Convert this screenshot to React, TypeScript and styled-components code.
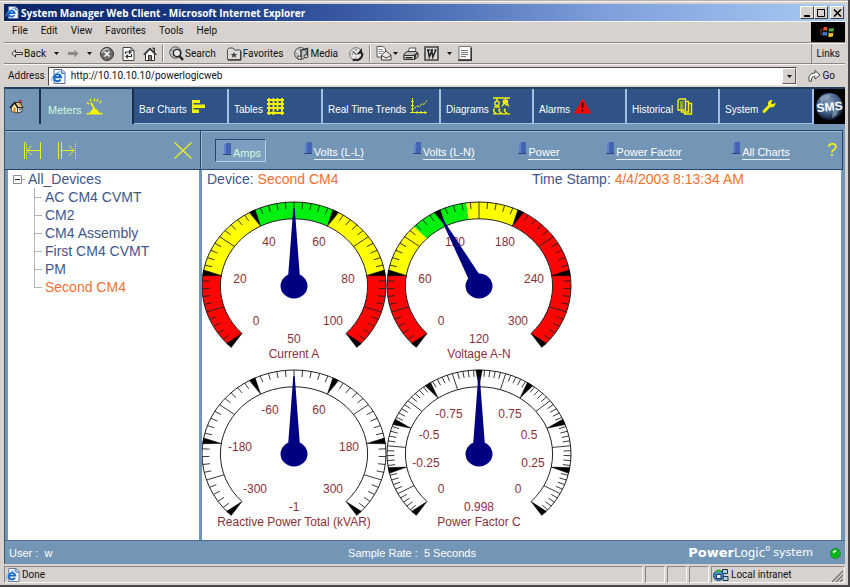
import React from "react";
import styled, { createGlobalStyle, css } from "styled-components";

const GlobalStyle = createGlobalStyle`
  * { box-sizing: border-box; }
  html, body, #root { height: 100%; }
  body { margin: 0; background: #3d383c; overflow: hidden; }
  button, input { font: inherit; color: inherit; border: 0; padding: 0; background: none; border-radius: 0; }
  svg { display: block; flex: none; }
`;

const chromeFont = `Roboto, "Noto Sans", sans-serif`;
const appFont = `"Liberation Sans", Arial, sans-serif`;

/* ---------- browser window ---------- */

const Window = styled.div`
  height: 100vh;
  display: flex;
  flex-direction: column;
  padding: 4px 3px 2px 4px;
  background: #d7d2cd;
  border-right: 2px solid #4a4448;
  border-bottom: 2px solid #4a4448;
  box-shadow: inset 0 1px #b5afad, inset 0 2px #f7f5f3;
  font: 10px/16px ${chromeFont};
  color: #111;
`;

const TitleBar = styled.header`
  display: flex;
  align-items: center;
  height: 17px;
  padding: 0 1px 0 2px;
  gap: 2px;
  background: linear-gradient(90deg, #0a2468 0%, #1b3a86 25%, #4a6db4 50%, #7fa0dc 72%, #a8cbf2 100%);
`;

const Title = styled.h1`
  flex: 1;
  margin: 0;
  font: bold 10px/16px "Open Sans", sans-serif;
  color: #fff;
  white-space: nowrap;
`;

const WindowButton = styled.button<{ $apart?: boolean }>`
  width: 14px;
  height: 13px;
  margin-left: ${(p) => (p.$apart ? "0" : "-2px")};
  background: #d7d2cd;
  border: 1px solid;
  border-color: #fff #443f42 #443f42 #fff;
  display: grid;
  place-items: center;
`;

const MenuBar = styled.nav`
  display: flex;
  align-items: stretch;
  height: 22px;
  border-top: 1px solid #f8f6f4;
  border-bottom: 1px solid #8b8684;
`;

const MenuItem = styled.button`
  padding: 0 0 2px;
  margin-left: 8px;
  margin-right: 5px;
`;

const Flag = styled.div`
  margin-left: auto;
  width: 34px;
  background: #000;
  display: grid;
  place-items: center;
`;

const ToolBar = styled.div`
  display: flex;
  align-items: center;
  height: 21px;
  padding-left: 7px;
  border-top: 1px solid #f8f6f4;
  border-bottom: 1px solid #8b8684;
`;

const toolGaps = { tight: 5, normal: 8, wide: 11 };

const Tool = styled.button<{ $gap?: keyof typeof toolGaps }>`
  display: flex;
  align-items: center;
  gap: 1px;
  white-space: nowrap;
  margin-right: ${(p) => toolGaps[p.$gap ?? "normal"]}px;
`;

const Separator = styled.span`
  width: 2px;
  height: 17px;
  margin-right: 5px;
  border-left: 1px solid #8b8684;
  border-right: 1px solid #fff;
`;

const Links = styled.a`
  margin-left: auto;
  padding: 0 5px 0 4px;
  border-left: 1px solid #8b8684;
  color: inherit;
  text-decoration: none;
  line-height: 19px;
`;

const AddressBar = styled.form`
  display: flex;
  align-items: center;
  height: 23px;
  padding-left: 4px;
  gap: 3px;
  border-top: 1px solid #f8f6f4;
`;

const AddressField = styled.div`
  flex: 1;
  height: 19px;
  display: flex;
  align-items: center;
  background: #fff;
  border: 1px solid;
  border-color: #4b4648 #e9e5e1 #e9e5e1 #4b4648;
  padding-left: 2px;
`;

const AddressInput = styled.input`
  flex: 1;
  min-width: 0;
  padding-left: 5px;
  outline: 0;
`;

const DropButton = styled.button`
  width: 14px;
  height: 16px;
  background: #d7d2cd;
  border: 1px solid;
  border-color: #fff #5b5658 #5b5658 #fff;
  display: grid;
  place-items: center;
`;

const GoButton = styled.button`
  display: flex;
  align-items: center;
  gap: 1px;
  padding: 0 10px 0 8px;
`;

const StatusBar = styled.footer`
  display: flex;
  gap: 2px;
  height: 17px;
  margin-top: 2px;
`;

const StatusCell = styled.div<{ $w?: number }>`
  ${(p) => (p.$w ? css`width: ${p.$w}px;` : css`flex: 1;`)}
  display: flex;
  align-items: center;
  gap: 2px;
  padding: 0 1px;
  border: 1px solid;
  border-color: #8b8684 #f8f6f4 #f8f6f4 #8b8684;
  white-space: nowrap;
`;

const Grip = styled.svg`
  margin-left: auto;
  align-self: flex-end;
`;

/* ---------- web client ---------- */

const Client = styled.main`
  flex: 1;
  min-height: 0;
  display: flex;
  flex-direction: column;
  background: #7396b7;
  border-top: 2px solid #27405f;
  border-left: 1px solid #3f556e;
  font: 11px/14px ${appFont};
`;

const Tabs = styled.nav`
  display: grid;
  grid-template-columns: 36fr 93fr 95fr 94fr 118fr 93fr 93fr 93fr 94fr 31fr;
  height: 35px;
`;

const Tab = styled.button<{ $active?: boolean }>`
  display: flex;
  align-items: center;
  gap: 4px;
  padding-left: ${(p) => (p.$active ? "7px" : "5px")};
  font-size: ${(p) => (p.$active ? "11px" : "10px")};
  white-space: nowrap;
  color: ${(p) => (p.$active ? "#d4fadc" : "#fff")};
  background: ${(p) => (p.$active ? "#7396b7" : "#2f5387")};
  border-right: ${(p) => (p.$active ? "2px solid #1c2e4e" : "2px solid #a3c1df")};
  border-bottom: ${(p) => (p.$active ? "0" : "1px solid #a3c1df")};

  span { margin-top: 7px; }
`;

const HomeTab = styled(Tab)`
  padding-left: 4px;
`;

const SmsTab = styled.a`
  display: grid;
  place-items: center;
  background: #000;
`;

const Options = styled.div`
  display: flex;
  height: 40px;
  margin: 6px 2px 0 0;
  border: 1px solid #24466e;
  border-left: 0;
  box-shadow: inset 0 1px #9dbad5;
`;

const TreeTools = styled.div`
  width: 196px;
  display: flex;
  align-items: center;
  gap: 16px;
  padding: 0 8px 0 18px;
  border-right: 1px solid #24466e;
`;

const IconButton = styled.button<{ $end?: boolean }>`
  margin-left: ${(p) => (p.$end ? "auto" : "0")};
`;

const ChartLinks = styled.nav`
  flex: 1;
  display: grid;
  grid-template-columns: 89fr 109fr 106fr 88fr 126fr 95fr auto;
  align-items: center;
  padding: 0 5px 0 14px;
  box-shadow: inset 1px 0 #9dbad5;
`;

const ChartLink = styled.a<{ $active?: boolean }>`
  justify-self: start;
  display: flex;
  align-items: flex-start;
  gap: 1px;
  height: 23px;
  padding: 3px 4px 0 0;
  white-space: nowrap;
  color: ${(p) => (p.$active ? "#d4fadc" : "#fff")};
  text-decoration: none;

  span {
    margin-top: 4px;
    line-height: 13px;
    border-bottom: ${(p) => (p.$active ? "0" : "1px solid #e4eef8")};
  }
  ${(p) =>
    p.$active &&
    css`
      padding: 3px 4px 0 7px;
      border: 1px solid;
      border-color: #24466e #b4cde4 #b4cde4 #24466e;
      background: #7c9ec0;
    `}
`;

const Help = styled.button`
  color: #f4f400;
  font-size: 18px;
  line-height: 24px;
`;

const Body = styled.div`
  flex: 1;
  min-height: 0;
  display: grid;
  grid-template-columns: 191px 1fr;
  gap: 3px;
  padding: 0 4px 0 3px;
  font-size: 14px;
  line-height: 18px;
  color: #3f5688;
`;

const Pane = styled.section`
  background: #fff;
  overflow: hidden;
`;

const TreeRoot = styled.div`
  display: flex;
  align-items: center;
  gap: 2px;
  padding-left: 5px;
`;

const TreeList = styled.ul`
  list-style: none;
  margin: 0;
  padding: 0 0 0 26px;
`;

const TreeNode = styled.li<{ $last?: boolean; $current?: boolean }>`
  height: 18px;
  display: flex;
  color: ${(p) => (p.$current ? "#f07030" : "inherit")};

  &::before {
    content: "";
    width: 8px;
    height: 9px;
    margin-right: 3px;
    border-bottom: 1px solid #b4b4b8;
  }
  background: linear-gradient(#b4b4b8, #b4b4b8) no-repeat 0 0 / 1px ${(p) => (p.$last ? "9px" : "18px")};
`;

const PlainLink = styled.a`
  color: inherit;
  text-decoration: none;
`;

const Reading = styled.div`
  display: grid;
  grid-template-columns: 327fr 311fr;
  padding-left: 5px;
  em { font-style: normal; color: #f07030; }
`;

const Gauges = styled.div`
  display: grid;
  grid-template-columns: 185px 185px;
  padding-top: 12px;
`;

const GaugeArt = styled.svg`
  font: 12px ${appFont};
  fill: #8b3038;
`;

const ClientFooter = styled.div`
  display: grid;
  grid-template-columns: 338fr 339fr auto;
  align-items: center;
  height: 24px;
  padding: 1px 4px 0;
  border-top: 1px solid #4c6d92;
  color: #fff;
`;

const Brand = styled.div`
  display: flex;
  align-items: center;
  font: 12px/16px "DejaVu Sans", sans-serif;
  b { font-size: 13px; }
  sup { font-size: 8px; line-height: 8px; align-self: flex-start; }
  small { font-size: 11px; margin: 0 17px 0 3px; }
`;

/* ---------- gauge ---------- */

type Band = [number, number, string];
type Label = [number, number, string];
interface GaugeProps {
  title: string;
  value: string;
  majors: number;
  needle: number;
  bands?: Band[];
  labels: Label[];
}

const CX = 92;
const CY = 86;
const RX = 92;
const RY = 84;

const at = (deg: number, r: number) => {
  const a = (deg * Math.PI) / 180;
  return `${(CX + RX * r * Math.sin(a)).toFixed(2)} ${(CY - RY * r * Math.cos(a)).toFixed(2)}`;
};
const arc = (from: number, to: number, r: number) =>
  `A${RX * r} ${RY * r} 0 ${Math.abs(to - from) > 180 ? 1 : 0} ${to > from ? 1 : 0} ${at(to, r)}`;

function Gauge({ title, value, majors, needle, bands = [], labels }: GaugeProps) {
  const step = 270 / majors;
  const ticks = Array.from({ length: majors * 10 + 1 }, (_, i) => i);
  return (
    <GaugeArt width="185" height="168" viewBox="0 0 185 168" role="img" aria-label={title} overflow="visible">
      {bands.map(([from, to, fill]) => (
        <path key={from} fill={fill} d={`M${at(from, 1)}${arc(from, to, 1)}L${at(to, 0.8)}${arc(to, from, 0.8)}Z`} />
      ))}
      <path d={`M${at(-135, 1)}${arc(-135, 135, 1)}`} fill="none" stroke="#222" />
      <path d={`M${at(-135, 0.8)}${arc(-135, 135, 0.8)}`} fill="none" stroke="#222" />
      {ticks.map((i) => {
        const d = -135 + (i * step) / 10;
        if (i % 10 === 0) {
          return <path key={i} fill="#000" stroke="#000" strokeWidth="0.5" d={`M${at(d - 2, 1)}L${at(d + 2, 1)}L${at(d, 0.8)}Z`} />;
        }
        const inner = i % 5 === 0 ? 0.8 : 0.92;
        return <path key={i} stroke="#222" strokeWidth="0.9" d={`M${at(d, 1)}L${at(d, inner)}`} />;
      })}
      {labels.map(([x, y, text], i) => (
        <text key={i} x={x} y={y} textAnchor="middle">{text}</text>
      ))}
      <text x={CX} y="143" textAnchor="middle">{value}</text>
      <text x={CX} y="158" textAnchor="middle">{title}</text>
      <g fill="#000080">
        <ellipse cx={CX} cy={CY} rx="13.5" ry="12.5" />
        <path d={`M${CX - 6} ${CY - 8}L${CX - 0.7} 8H${CX + 0.7}L${CX + 6} ${CY - 8}Z`} transform={`rotate(${needle} ${CX} ${CY})`} />
      </g>
    </GaugeArt>
  );
}

const RED = "#fb0505";
const YELLOW = "#ffff00";
const GREEN = "#00f010";

const gauges: GaugeProps[] = [
  {
    title: "Current A", value: "50", majors: 5, needle: 0,
    bands: [[-135, -81, RED], [-81, -27, YELLOW], [-27, 27, GREEN], [27, 81, YELLOW], [81, 135, RED]],
    labels: [[54, 125, "0"], [38, 83, "20"], [67, 46, "40"], [117, 46, "60"], [146, 83, "80"], [131, 125, "100"]],
  },
  {
    title: "Voltage A-N", value: "120", majors: 5, needle: -29,
    bands: [[-135, -81, RED], [-81, -45, YELLOW], [-45, -8, GREEN], [-8, 27, YELLOW], [27, 135, RED]],
    labels: [[54, 125, "0"], [38, 83, "60"], [68, 46, "120"], [118, 46, "180"], [147, 83, "240"], [131, 125, "300"]],
  },
  {
    title: "Reactive Power Total (kVAR)", value: "-1", majors: 5, needle: 0,
    labels: [[53, 125, "-300"], [38, 83, "-180"], [68, 46, "-60"], [117, 46, "60"], [147, 83, "180"], [131, 125, "300"]],
  },
  {
    title: "Power Factor C", value: "0.998", majors: 8, needle: 0,
    labels: [[54, 125, "0"], [39, 99, "-0.25"], [42, 71, "-0.5"], [62, 50, "-0.75"], [123, 50, "0.75"], [142, 71, "0.5"], [146, 99, "0.25"], [131, 125, "0"]],
  },
];

/* ---------- icons ---------- */

const Caret = () => (
  <svg width="5" height="3" viewBox="0 0 5 3"><path d="M0 0h5L2.5 3Z" fill="#111" /></svg>
);

const PageE = ({ size = 15 }: { size?: number }) => (
  <svg width={size} height={size} viewBox="0 0 15 15">
    <path d="M3 .5h8l3 3v11H3Z" fill="#f6f9ff" stroke="#5a6c9a" />
    <path d="M10.500.5v4H14" fill="#c9d7ef" stroke="#5a6c9a" />
    <path d="M9.600 10.500A3.500 3.500 0 1 1 10 8.200H3.500" fill="none" stroke="#1568c8" strokeWidth="2" />
    <path d="M1 12Q-.5 8 5 4.500T11.500 4" fill="none" stroke="#5fa8e8" />
  </svg>
);

const WindowsFlag = () => (
  <svg width="16" height="14" viewBox="0 0 16 14">
    <path d="M3.500 2.500q2-1.500 4.500 0L7.500 6q-2.500-1.500-4.500 0Z" fill="#e2532d" />
    <path d="M9 3q2.500 1.300 5-.3L13.500 6.500q-2.500 1.500-5 .2Z" fill="#55b344" />
    <path d="M2.800 7q2-1.500 4.500 0l-.5 4q-2.500-1.500-4.500 0Z" fill="#3c78d8" />
    <path d="M8.400 7.600q2.500 1.300 5-.2L13 11.200q-2.500 1.500-5 .2Z" fill="#f2c230" />
    <path d="M1.500 3v8M.5 4v5" stroke="#874035" strokeDasharray="1 1" />
    <path d="M7.800 2v10M3 6.500l5 .3 5.500.2" stroke="#111" fill="none" />
  </svg>
);

const Arrow = ({ gray }: { gray?: boolean }) => (
  <svg width="12" height="9" viewBox="0 0 12 9">
    {gray ? (
      <path d="M11.500 4.500L7.500.5v2.500H1v3h6.500v2.500Z" fill="#8d8988" />
    ) : (
      <path d="M.8 4.500L4.500 1v2.500h7v2h-7V8Z" fill="#f2f0ee" stroke="#333" />
    )}
  </svg>
);

const Stop = () => (
  <svg width="14" height="14" viewBox="0 0 14 14">
    <circle cx="7" cy="7" r="6.500" fill="#6c6c6c" stroke="#333" />
    <path d="M2 6a5 5 0 0 1 7-3.500" stroke="#c8c8c8" strokeWidth="1.500" fill="none" />
    <path d="M4.500 4.500l5 5m0-5l-5 5" stroke="#fff" strokeWidth="1.600" />
  </svg>
);

const Refresh = () => (
  <svg width="13" height="14" viewBox="0 0 13 14">
    <path d="M1 .5h8l3 3v10H1Z" fill="#fff" stroke="#444" />
    <path d="M9 .5v3h3" fill="none" stroke="#444" />
    <path d="M3.500 7V5h5M7 3.200L9 5 7 6.800M9.500 7v2.500h-5M6 7.700l-2 1.800 2 1.900" fill="none" stroke="#333" strokeWidth="1.200" />
  </svg>
);

const House = () => (
  <svg width="14" height="14" viewBox="0 0 14 14">
    <path d="M9.500 1h2v4" fill="#777" stroke="#333" />
    <path d="M2.500 7v6.500h9V7L7 2.500Z" fill="#fff" stroke="#333" />
    <path d="M.7 7.700L7 1.500l6.300 6.200" fill="none" stroke="#333" strokeWidth="1.400" />
    <path d="M5.500 13V8.500h3V13" fill="#888" stroke="#333" />
  </svg>
);

const Search = () => (
  <svg width="15" height="15" viewBox="0 0 15 15">
    <circle cx="6.500" cy="6.500" r="5.700" fill="#c8c8c8" stroke="#555" />
    <path d="M1.500 4l4 1-1.500 4M3 11l2-2" stroke="#777" fill="none" />
    <circle cx="8" cy="7" r="3.600" fill="#eee" stroke="#222" strokeWidth="1.400" />
    <path d="M10.500 10l3.500 4" stroke="#222" strokeWidth="2.400" />
  </svg>
);

const Folder = () => (
  <svg width="15" height="14" viewBox="0 0 15 14">
    <path d="M.5 12.500v-10L2 1h4l1.500 2h6v9.500Z" fill="#dcdad8" stroke="#555" />
    <path d="M1 13.200h13V4" fill="none" stroke="#333" />
    <path d="M7 5l1 2h2.300L8.500 8.500l.6 2.300L7 9.500l-2.100 1.300.6-2.300L3.700 7H6Z" fill="#444" />
  </svg>
);

const Media = () => (
  <svg width="15" height="14" viewBox="0 0 15 14">
    <circle cx="6.500" cy="6.500" r="6" fill="#bdbdbd" stroke="#555" />
    <path d="M2 4l3 1 1 3-2 3M8 1l-1 3" stroke="#fff" fill="none" />
    <path d="M7 10V3l6.500-1.500v7" fill="none" stroke="#333" strokeWidth="1.400" />
    <ellipse cx="5.500" cy="10.700" rx="2.200" ry="1.700" fill="#ddd" stroke="#333" />
    <ellipse cx="12" cy="9.200" rx="2" ry="1.600" fill="#ddd" stroke="#333" />
  </svg>
);

const History = () => (
  <svg width="15" height="15" viewBox="0 0 15 15">
    <circle cx="7" cy="8" r="6.300" fill="#e4e4e4" stroke="#777" />
    <path d="M13.300 7a6.500 6.500 0 0 1-9.500 6.500" fill="none" stroke="#222" strokeWidth="2" />
    <path d="M7 3v1.500M2.500 8H4M7 13v-1.500M3.500 5l1 1" stroke="#555" />
    <path d="M7.500 8.500L13 2v5.500Z" fill="#222" />
    <path d="M7.500 8.500L4 6" stroke="#222" />
  </svg>
);

const Mail = () => (
  <svg width="16" height="15" viewBox="0 0 16 15">
    <path d="M1 .5h6l2.500 2.500v8H1Z" fill="#f8f8f8" stroke="#555" />
    <path d="M2.500 3.500h4M2.500 5.500h5M2.500 7.500h3" stroke="#888" />
    <path d="M5.500 9L10 5l5 4v5h-9.500Z" fill="#e8e8e8" stroke="#444" />
    <path d="M5.500 9.500L10 12l5-2.500" fill="none" stroke="#444" />
  </svg>
);

const Printer = () => (
  <svg width="16" height="14" viewBox="0 0 16 14">
    <path d="M5 5.500L6.500 1h6.500l-1.500 4.500" fill="#fff" stroke="#555" />
    <path d="M1 7l3-2.500h9L15 6v4l-3.500 2.500H1Z" fill="#bbb" stroke="#333" />
    <path d="M1 8.500h10.500v4H1Z" fill="#ddd" stroke="#333" />
    <path d="M2.500 10.700h7M12 12V8l3-2" stroke="#222" fill="none" strokeWidth="1.500" />
  </svg>
);

const WordIcon = () => (
  <svg width="15" height="15" viewBox="0 0 15 15">
    <path d="M1 1h13v13H1Z" fill="#d8d8d8" stroke="#444" strokeWidth="1.600" />
    <path d="M3 4h2.800M6.500 4H9M10.500 4h2M4 4l1.300 7L7.800 5l1 6 3-7" fill="none" stroke="#222" strokeWidth="1.500" />
  </svg>
);

const Note = () => (
  <svg width="15" height="15" viewBox="0 0 15 15">
    <path d="M2 .5h12v13H2Z" fill="#fafafa" stroke="#777" />
    <path d="M1 14.200h13.300V1.500" fill="none" stroke="#333" strokeWidth="1.400" />
    <path d="M4 4.500h7M4 6.500h7M4 8.500h7M4 10.500h5" stroke="#777" />
  </svg>
);

const GoArrow = () => (
  <svg width="13" height="14" viewBox="0 0 13 14">
    <path d="M1.500 12.500C-.5 8 2.500 3.500 7 4V1.500L12 6 7 10V7.500C4.500 7.200 3 9 3.500 12Z" fill="#f4f4f4" stroke="#444" />
  </svg>
);

const ColorHouse = () => (
  <svg width="15" height="15" viewBox="0 0 15 15">
    <path d="M10 1h2.500v4.500H10Z" fill="#b02a48" />
    <path d="M2.500 8.500L5.500 4.500 8.500 9v5l-6-1.500Z" fill="#fff2b0" stroke="#4a3418" strokeWidth=".8" />
    <path d="M8.500 9h4.500v3.500L8.500 14Z" fill="#fffbe8" stroke="#222" strokeWidth=".8" />
    <path d="M5.500 3.500h5.500L14 8.500H8.800Z" fill="#e0bd7c" stroke="#1d1010" strokeWidth=".8" />
    <path d="M1 9L5.500 3.500 8.800 8.800" fill="none" stroke="#1d1010" strokeWidth="1.200" />
    <path d="M4.500 8.500h2v4.800l-2-.5Z" fill="#e5761c" />
    <path d="M10.300 10h1.500v1.500h-1.500Z" fill="#3c5a90" />
  </svg>
);

const MeterIcon = () => (
  <svg width="17" height="17" viewBox="0 0 17 17">
    <path d="M.5 15.700h16" stroke="#f4f400" strokeWidth="1.600" />
    <path d="M4 14.500L6.500 11.500h4L13 14.500Z" fill="#f4f400" stroke="#f4f400" />
    <path d="M9 12L5 5" stroke="#f4f400" strokeWidth="1.800" />
    <path d="M1 4.500l2 1.800M4 1l1 2.500M8.500 .5v3M12 1l-1 2.600M15.500 3l-2 2.200" stroke="#f4f400" strokeWidth="1.200" />
  </svg>
);

const BarsIcon = () => (
  <svg width="15" height="15" viewBox="0 0 15 15">
    <path d="M1 1h8v3H1ZM1 5.500h13v3.500H1ZM1 10.500h7V14H1ZM1 1h1.500v13H1Z" fill="#f4f400" />
  </svg>
);

const TableIcon = () => (
  <svg width="17" height="17" viewBox="0 0 17 17">
    <path d="M0 2h17M0 6h17M0 10h17M0 15h17M2 0v17M6.500 0v17M10.500 0v13M15 0v17" stroke="#f4f400" strokeWidth="1.800" />
  </svg>
);

const TrendIcon = () => (
  <svg width="18" height="17" viewBox="0 0 18 17">
    <path d="M2.500 0v15M0 14.500h17M1 3.500h3M1 7.500h3M1 11h3M7 13v3M11 13v3M15 13v3" stroke="#e8f020" />
    <path d="M4.500 10.500l2.500-3 2.500 1.500L12 5.500l2 1 3-4" fill="none" stroke="#e8f020" strokeDasharray="3 1" />
  </svg>
);

const DiagramIcon = () => (
  <svg width="17" height="18" viewBox="0 0 17 18">
    <path d="M0 1h17M4 1v3M12.500 1v3" stroke="#f4f400" strokeWidth="1.400" />
    <circle cx="4" cy="6.300" r="2.200" fill="none" stroke="#f4f400" strokeWidth="1.400" />
    <path d="M1 10h6M9 9.500L12.500 4 16 9.500M9.500 4.500L14 8.500M10.500 3.500h4v2h-4Z" fill="none" stroke="#f4f400" strokeWidth="1.300" />
    <path d="M.5 12v2l3 3M6 12v2l3 3M11.500 12v2l3 3M0 12.300h2M5.500 12.300h2M11 12.300h2M0 16.800h17" fill="none" stroke="#f4f400" strokeWidth="1.300" />
  </svg>
);

const AlarmIcon = () => (
  <svg width="17" height="16" viewBox="0 0 17 16">
    <path d="M8.500 0L17 15.500H0Z" fill="#f60808" />
    <path d="M8.500 4.500v5.500M8.500 11.500v2" stroke="#300" strokeWidth="1.800" />
  </svg>
);

const HistoricalIcon = () => (
  <svg width="16" height="17" viewBox="0 0 16 17">
    <g fill="#2f5387" stroke="#f4f400" strokeWidth="1.400">
      <path d="M7.500 5.500h7v10.500h-7Z" />
      <path d="M4.500 3.500h7v10.500h-7Z" />
      <path d="M1 2.500L2.500 1H8.500v11H1Z" />
      <path d="M3 4h3.500M3 6h3.500M3 8h3.500M3 10h3.500" strokeWidth="1" />
    </g>
  </svg>
);

const Wrench = () => (
  <svg width="14" height="15" viewBox="0 0 14 15">
    <path d="M13.300 3.500L10.800 5.500 9 4l1.700-3C7 .5 5.200 3.200 6.300 6L.8 11.500Q0 14 2.800 14L8 8.200c3.500.6 6-1.500 5.300-4.700Z" fill="#f4f400" />
  </svg>
);

const Globe = () => (
  <svg width="29" height="31" viewBox="0 0 29 31">
    <defs>
      <radialGradient id="globe" cx=".45" cy=".35" r=".65">
        <stop offset="0" stopColor="#7f97b8" />
        <stop offset=".6" stopColor="#45628c" />
        <stop offset="1" stopColor="#0c1930" />
      </radialGradient>
    </defs>
    <circle cx="14.500" cy="15.500" r="13.500" fill="url(#globe)" />
    <path d="M5 7q5-5 11-3l-2 4-5 1-3 4ZM18 20l5-1-1 5-5 3Z" fill="#a8b8c8" opacity=".55" />
    <text x="14.500" y="20" textAnchor="middle" fill="#fff" fontSize="12" fontFamily="Liberation Sans" fontWeight="bold" transform="rotate(-6 14.500 16)">SMS</text>
  </svg>
);

const PanLeft = () => (
  <svg width="18" height="17" viewBox="0 0 18 17">
    <path d="M1.500 0v17M17.500 0v17M4 8.500h13M9 3.500l-5 5 5 5" fill="none" stroke="#e8f020" />
    <path d="M3.500 0v17" stroke="#e8f020" strokeDasharray="1 1" />
  </svg>
);

const PanRight = () => (
  <svg width="20" height="17" viewBox="0 0 20 17">
    <path d="M1.500 0v17M4.500 0v17M5 8.500h12M12 3.500l5 5-5 5" fill="none" stroke="#e8f020" />
    <path d="M18.500 0v17" stroke="#e8f020" strokeDasharray="1 1" />
  </svg>
);

const Cross = () => (
  <svg width="18" height="17" viewBox="0 0 18 17"><path d="M.5.500l17 16m0-16l-17 16" stroke="#e8f020" strokeWidth="1.300" /></svg>
);

const Marker = () => (
  <svg width="9" height="13" viewBox="0 0 9 13">
    <path d="M1 1h3v10H1Z" fill="#5f80cc" />
    <path d="M3 0h5v11H3Z" fill="#4365b4" />
    <path d="M0 11h8v1H0Z" fill="#2c4678" />
  </svg>
);

const Expander = () => (
  <svg width="13" height="9" viewBox="0 0 13 9">
    <path d="M.5.500h8v8h-8Z" fill="#fff" stroke="#8c8c94" />
    <path d="M2 4.500h5" stroke="#222" />
    <path d="M9 4.500h3" stroke="#b4b4b8" />
  </svg>
);

const Led = () => (
  <svg width="11" height="11" viewBox="0 0 11 11">
    <circle cx="5.500" cy="5.500" r="5" fill="#08b818" stroke="#067a14" strokeWidth=".6" />
    <path d="M3 4.500l3-2" stroke="#e8ffe8" strokeWidth="1.600" />
  </svg>
);

const Intranet = () => (
  <svg width="16" height="14" viewBox="0 0 16 14">
    <path d="M9.500 1.500h5v4h-5ZM10 8.500h5v4h-5Z" fill="#a8cfe8" stroke="#234" />
    <path d="M8 4h2M8 10h2" stroke="#234" strokeWidth="1.500" />
    <circle cx="5.500" cy="7.500" r="5" fill="#3c8ed0" stroke="#1b3a68" />
    <path d="M1.500 4Q5-1 9 3L6 5Z" fill="#3fae49" />
    <path d="M3.500 6.500h4.500v4H3.500Z" fill="#e8f4ff" stroke="#234" />
  </svg>
);

/* ---------- data ---------- */

const menus = ["File", "Edit", "View", "Favorites", "Tools", "Help"];
const tabs: [string, React.ReactNode][] = [
  ["Bar Charts", <BarsIcon />],
  ["Tables", <TableIcon />],
  ["Real Time Trends", <TrendIcon />],
  ["Diagrams", <DiagramIcon />],
  ["Alarms", <AlarmIcon />],
  ["Historical", <HistoricalIcon />],
  ["System", <Wrench />],
];
const charts = ["Amps", "Volts (L-L)", "Volts (L-N)", "Power", "Power Factor", "All Charts"];
const devices = ["AC CM4 CVMT", "CM2", "CM4 Assembly", "First CM4 CVMT", "PM", "Second CM4"];

export default function App() {
  return (
    <>
      <GlobalStyle />
      <Window>
        <TitleBar>
          <PageE size={13} />
          <Title>System Manager Web Client - Microsoft Internet Explorer</Title>
          <WindowButton aria-label="Minimize"><svg width="9" height="8"><path d="M1 7h6" stroke="#000" strokeWidth="2" /></svg></WindowButton>
          <WindowButton aria-label="Maximize"><svg width="10" height="9"><path d="M1 1.500h8M1.500 1v7.500h7V1" fill="none" stroke="#000" /><path d="M1 1h8v1H1Z" /></svg></WindowButton>
          <WindowButton $apart aria-label="Close"><svg width="9" height="8"><path d="M1 .5l7 7m0-7l-7 7" stroke="#000" strokeWidth="1.600" /></svg></WindowButton>
        </TitleBar>
        <MenuBar>
          {menus.map((m) => <MenuItem key={m}>{m}</MenuItem>)}
          <Flag><WindowsFlag /></Flag>
        </MenuBar>
        <ToolBar>
          <Tool><Arrow />Back</Tool>
          <Tool aria-label="Back list"><Caret /></Tool>
          <Tool aria-label="Forward"><Arrow gray /></Tool>
          <Tool aria-label="Forward list"><Caret /></Tool>
          <Tool aria-label="Stop"><Stop /></Tool>
          <Tool aria-label="Refresh"><Refresh /></Tool>
          <Tool $gap="tight" aria-label="Home"><House /></Tool>
          <Separator />
          <Tool $gap="wide"><Search />Search</Tool>
          <Tool $gap="wide"><Folder />Favorites</Tool>
          <Tool $gap="wide"><Media />Media</Tool>
          <Tool $gap="tight" aria-label="History"><History /></Tool>
          <Separator />
          <Tool $gap="tight" aria-label="Mail"><Mail /><Caret /></Tool>
          <Tool $gap="tight" aria-label="Print"><Printer /></Tool>
          <Tool aria-label="Edit with Word"><WordIcon /></Tool>
          <Tool $gap="tight" aria-label="Edit list"><Caret /></Tool>
          <Tool aria-label="Discuss"><Note /></Tool>
          <Links href="#links">Links</Links>
        </ToolBar>
        <AddressBar onSubmit={(e) => e.preventDefault()}>
          <label htmlFor="address">Address</label>
          <AddressField>
            <PageE />
            <AddressInput id="address" defaultValue="http://10.10.10.10/powerlogicweb" />
            <DropButton type="button" aria-label="Recent addresses"><Caret /></DropButton>
          </AddressField>
          <GoButton type="submit"><GoArrow />Go</GoButton>
        </AddressBar>

        <Client>
          <Tabs>
            <HomeTab $active aria-label="Home"><ColorHouse /></HomeTab>
            <Tab $active><span>Meters</span><MeterIcon /></Tab>
            {tabs.map(([name, icon]) => (
              <Tab key={name}><span>{name}</span>{icon}</Tab>
            ))}
            <SmsTab href="#sms"><Globe /></SmsTab>
          </Tabs>
          <Options>
            <TreeTools>
              <IconButton aria-label="Narrow tree"><PanLeft /></IconButton>
              <IconButton aria-label="Widen tree"><PanRight /></IconButton>
              <IconButton $end aria-label="Close tree"><Cross /></IconButton>
            </TreeTools>
            <ChartLinks>
              {charts.map((c, i) => (
                <ChartLink key={c} href="#chart" $active={i === 0}><Marker /><span>{c}</span></ChartLink>
              ))}
              <Help aria-label="Help">?</Help>
            </ChartLinks>
          </Options>
          <Body>
            <Pane>
              <TreeRoot><Expander />All_Devices</TreeRoot>
              <TreeList>
                {devices.map((d, i) => (
                  <TreeNode key={d} $last={i === devices.length - 1} $current={i === devices.length - 1}>
                    <PlainLink href="#device">{d}</PlainLink>
                  </TreeNode>
                ))}
              </TreeList>
            </Pane>
            <Pane>
              <Reading>
                <div>Device: <em>Second CM4</em></div>
                <div>Time Stamp: <em>4/4/2003 8:13:34 AM</em></div>
              </Reading>
              <Gauges>
                {gauges.map((g) => <Gauge key={g.title} {...g} />)}
              </Gauges>
            </Pane>
          </Body>
          <ClientFooter>
            <span>User :&nbsp; w</span>
            <span>Sample Rate :&nbsp; 5 Seconds</span>
            <Brand><b>Power</b>Logic<sup>o</sup><small>system</small><Led /></Brand>
          </ClientFooter>
        </Client>

        <StatusBar>
          <StatusCell><PageE size={14} />Done</StatusCell>
          <StatusCell $w={20} />
          <StatusCell $w={20} />
          <StatusCell $w={20} />
          <StatusCell $w={134}>
            <Intranet />Local intranet
            <Grip width="12" height="12" viewBox="0 0 12 12"><path d="M1 12L12 1M5 12l7-7M9 12l3-3" stroke="#77706e" strokeWidth="1.300" /></Grip>
          </StatusCell>
        </StatusBar>
      </Window>
    </>
  );
}
